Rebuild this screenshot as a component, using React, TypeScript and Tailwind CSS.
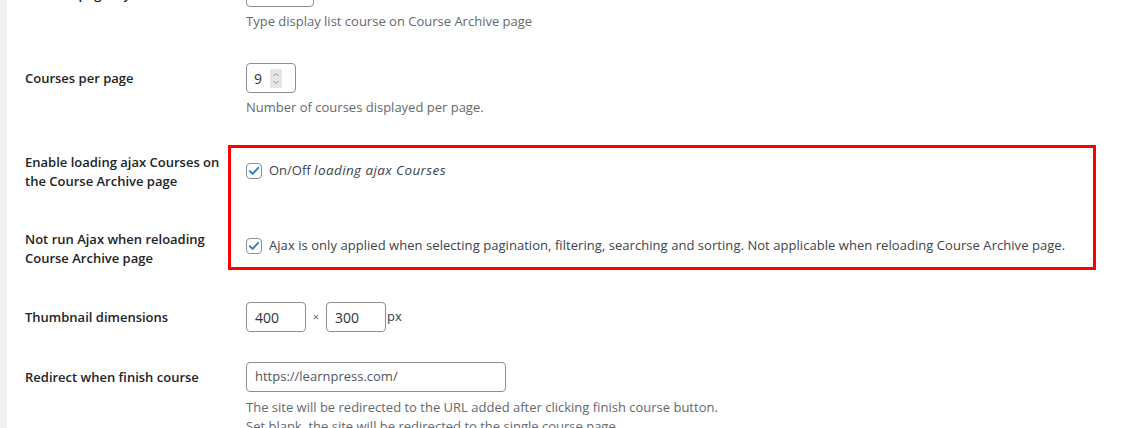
import type { ReactNode } from "react";

const font = { fontFamily: '"Segoe UI", "Open Sans", "Noto Sans", sans-serif' };

function Label({ children, className = "" }: { children: ReactNode; className?: string }) {
  return (
    <div className={`w-[221px] shrink-0 text-[13px] font-semibold leading-[19px] text-[#1d2327] ${className}`}>
      {children}
    </div>
  );
}

function Description({ children }: { children: ReactNode }) {
  return <p className="text-[13px] leading-[19px] text-[#646970]">{children}</p>;
}

function Checkbox() {
  return (
    <span className="flex h-4 w-4 shrink-0 items-center justify-center rounded-[4px] border border-[#8c8f94] bg-white">
      <svg viewBox="0 0 16 16" className="h-[14px] w-[14px]">
        <path d="M3.2 8.3 L6.4 11.3 L12.8 4.4" fill="none" stroke="#2f7fc1" strokeWidth="2.2" strokeLinecap="round" strokeLinejoin="round" />
      </svg>
    </span>
  );
}

function Spinner() {
  return (
    <span className="flex h-[19px] w-[12px] flex-col items-center justify-center bg-[#e6e6e6]">
      <svg viewBox="0 0 12 19" className="h-[19px] w-[12px]">
        <path d="M3.5 7 L6 4.5 L8.5 7" fill="none" stroke="#8c8f94" strokeWidth="1" />
        <path d="M3.5 12 L6 14.5 L8.5 12" fill="none" stroke="#8c8f94" strokeWidth="1" />
      </svg>
    </span>
  );
}

export default function App() {
  return (
    <div className="flex h-[428px] w-[1123px] overflow-hidden bg-white" style={font}>
      <div className="w-[7px] shrink-0 bg-[#f0f0f1]" />
      <div className="flex min-w-0 flex-1 flex-col pl-[18px]">
        {/* layout row, cut at the top */}
        <div className="mt-[-23px] flex">
          <Label className="pt-[8px]">Courses page layout</Label>
          <div className="flex flex-col">
            <div className="h-[30px] w-[68px] rounded-[4px] border border-[#8c8f94]" />
            <div className="mt-[5px]">
              <Description>Type display list course on Course Archive page</Description>
            </div>
          </div>
        </div>

        {/* courses per page */}
        <div className="mt-[32px] flex">
          <Label className="pt-[6px]">Courses per page</Label>
          <div className="flex flex-col">
            <div className="flex h-[30px] w-[50px] items-center gap-[8px] rounded-[4px] border border-[#8c8f94] pl-[7px] text-[14px] text-[#2c3338]">
              <span>9</span>
              <Spinner />
            </div>
            <div className="mt-[5px]">
              <Description>Number of courses displayed per page.</Description>
            </div>
          </div>
        </div>

        {/* ajax settings, boxed */}
        <div className="mt-[28px] flex">
          <div className="flex w-[203px] shrink-0 flex-col pt-[8px]">
            <Label>
              Enable loading ajax Courses on
              <br />
              the Course Archive page
            </Label>
            <Label className="mt-[39px]">
              Not run Ajax when reloading
              <br />
              Course Archive page
            </Label>
          </div>
          <div className="flex h-[125px] w-[868px] flex-col justify-between border-[3px] border-[#ff0000] pb-[12px] pl-[15px] pt-[13px]">
            <div className="flex items-center gap-[7px] text-[13px] leading-[19px] text-[#3c434a]">
              <Checkbox />
              <span>
                On/Off <em className="text-[13.5px] tracking-[0.4px]">loading ajax Courses</em>
              </span>
            </div>
            <div className="flex items-center gap-[7px] text-[13px] leading-[19px] tracking-[0.05px] text-[#3c434a]">
              <Checkbox />
              <span>
                Ajax is only applied when selecting pagination, filtering, searching and sorting. Not applicable when
                reloading Course Archive page.
              </span>
            </div>
          </div>
        </div>

        {/* thumbnail */}
        <div className="mt-[32px] flex items-center">
          <Label>Thumbnail dimensions</Label>
          <div className="flex items-center text-[14px] text-[#2c3338]">
            <div className="flex h-[30px] w-[60px] items-center rounded-[4px] border border-[#8c8f94] pl-[8px]">400</div>
            <span className="w-[20px] text-center text-[11px] text-[#646970]">×</span>
            <div className="flex h-[30px] w-[60px] items-center rounded-[4px] border border-[#8c8f94] pl-[8px]">300</div>
            <span className="ml-px text-[13px] text-[#3c434a]">px</span>
          </div>
        </div>

        {/* redirect */}
        <div className="mt-[30px] flex">
          <Label className="pt-[6px]">Redirect when finish course</Label>
          <div className="flex flex-col">
            <div className="flex h-[30px] w-[260px] items-center rounded-[4px] border border-[#8c8f94] pl-[8px] text-[13px] text-[#50575e]">
              https://learnpress.com/
            </div>
            <div className="mt-[6px]">
              <Description>The site will be redirected to the URL added after clicking finish course button.</Description>
              <Description>Set blank, the site will be redirected to the single course page.</Description>
            </div>
          </div>
        </div>
      </div>
    </div>
  );
}
